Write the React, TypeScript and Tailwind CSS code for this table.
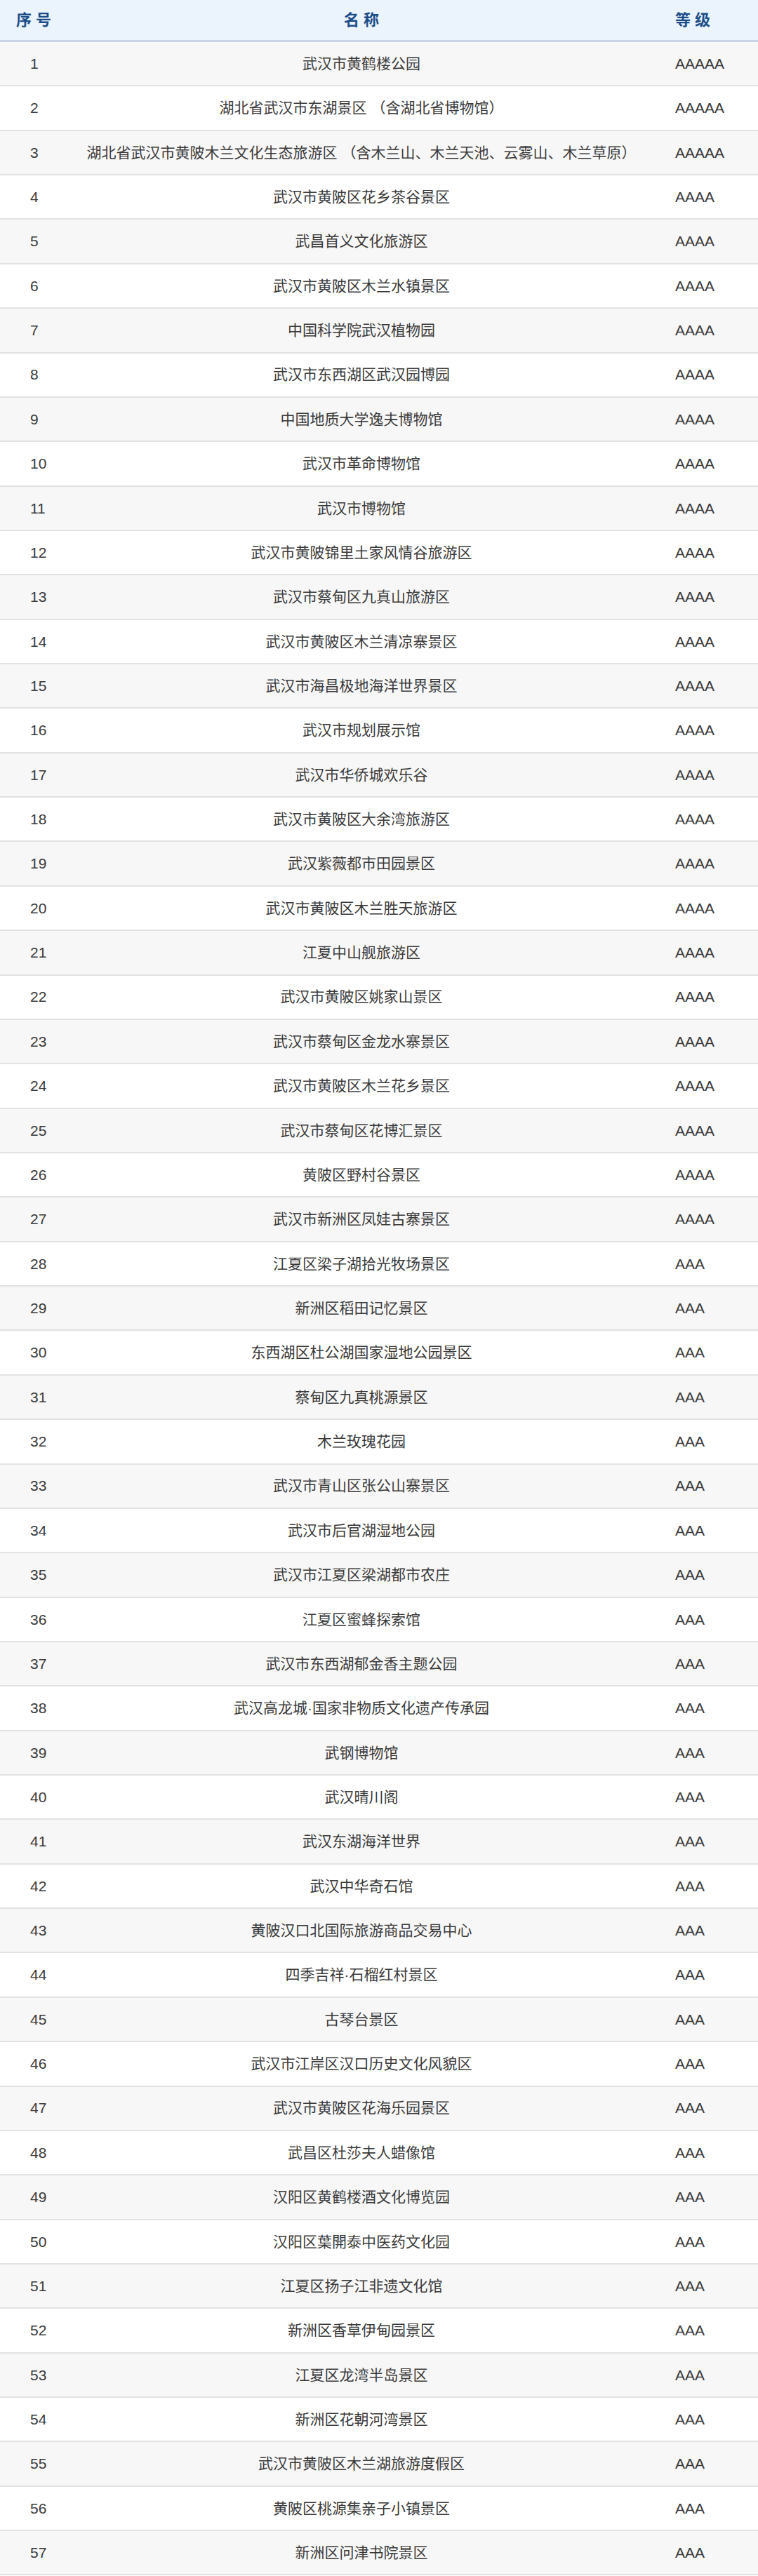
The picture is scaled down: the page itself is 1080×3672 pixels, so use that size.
const rows: [string, string][] = [
  ['武汉市黄鹤楼公园', 'AAAAA'],
  ['湖北省武汉市东湖景区 （含湖北省博物馆）', 'AAAAA'],
  ['湖北省武汉市黄陂木兰文化生态旅游区 （含木兰山、木兰天池、云雾山、木兰草原）', 'AAAAA'],
  ['武汉市黄陂区花乡茶谷景区', 'AAAA'],
  ['武昌首义文化旅游区', 'AAAA'],
  ['武汉市黄陂区木兰水镇景区', 'AAAA'],
  ['中国科学院武汉植物园', 'AAAA'],
  ['武汉市东西湖区武汉园博园', 'AAAA'],
  ['中国地质大学逸夫博物馆', 'AAAA'],
  ['武汉市革命博物馆', 'AAAA'],
  ['武汉市博物馆', 'AAAA'],
  ['武汉市黄陂锦里土家风情谷旅游区', 'AAAA'],
  ['武汉市蔡甸区九真山旅游区', 'AAAA'],
  ['武汉市黄陂区木兰清凉寨景区', 'AAAA'],
  ['武汉市海昌极地海洋世界景区', 'AAAA'],
  ['武汉市规划展示馆', 'AAAA'],
  ['武汉市华侨城欢乐谷', 'AAAA'],
  ['武汉市黄陂区大余湾旅游区', 'AAAA'],
  ['武汉紫薇都市田园景区', 'AAAA'],
  ['武汉市黄陂区木兰胜天旅游区', 'AAAA'],
  ['江夏中山舰旅游区', 'AAAA'],
  ['武汉市黄陂区姚家山景区', 'AAAA'],
  ['武汉市蔡甸区金龙水寨景区', 'AAAA'],
  ['武汉市黄陂区木兰花乡景区', 'AAAA'],
  ['武汉市蔡甸区花博汇景区', 'AAAA'],
  ['黄陂区野村谷景区', 'AAAA'],
  ['武汉市新洲区凤娃古寨景区', 'AAAA'],
  ['江夏区梁子湖拾光牧场景区', 'AAA'],
  ['新洲区稻田记忆景区', 'AAA'],
  ['东西湖区杜公湖国家湿地公园景区', 'AAA'],
  ['蔡甸区九真桃源景区', 'AAA'],
  ['木兰玫瑰花园', 'AAA'],
  ['武汉市青山区张公山寨景区', 'AAA'],
  ['武汉市后官湖湿地公园', 'AAA'],
  ['武汉市江夏区梁湖都市农庄', 'AAA'],
  ['江夏区蜜蜂探索馆', 'AAA'],
  ['武汉市东西湖郁金香主题公园', 'AAA'],
  ['武汉高龙城·国家非物质文化遗产传承园', 'AAA'],
  ['武钢博物馆', 'AAA'],
  ['武汉晴川阁', 'AAA'],
  ['武汉东湖海洋世界', 'AAA'],
  ['武汉中华奇石馆', 'AAA'],
  ['黄陂汉口北国际旅游商品交易中心', 'AAA'],
  ['四季吉祥·石榴红村景区', 'AAA'],
  ['古琴台景区', 'AAA'],
  ['武汉市江岸区汉口历史文化风貌区', 'AAA'],
  ['武汉市黄陂区花海乐园景区', 'AAA'],
  ['武昌区杜莎夫人蜡像馆', 'AAA'],
  ['汉阳区黄鹤楼酒文化博览园', 'AAA'],
  ['汉阳区葉開泰中医药文化园', 'AAA'],
  ['江夏区扬子江非遗文化馆', 'AAA'],
  ['新洲区香草伊甸园景区', 'AAA'],
  ['江夏区龙湾半岛景区', 'AAA'],
  ['新洲区花朝河湾景区', 'AAA'],
  ['武汉市黄陂区木兰湖旅游度假区', 'AAA'],
  ['黄陂区桃源集亲子小镇景区', 'AAA'],
  ['新洲区问津书院景区', 'AAA'],
]

const font = { fontFamily: '"Liberation Sans", "Noto Sans CJK SC", sans-serif' }

export default function App() {
  return (
    <div className="w-[1080px] bg-white text-[#3a3a3a]" style={font}>
      <div className="grid h-[60px] grid-cols-[100px_1fr_150px] items-center border-b-[3px] border-[#c8d5e5] bg-[#ebf3fc] text-[22px] font-bold text-[#1c4d88]">
        <div className="pl-[23px]">序 号</div>
        <div className="text-center">名 称</div>
        <div className="pl-[32px]">等 级</div>
      </div>
      {rows.map(([name, grade], i) => (
        <div
          key={i}
          className={`grid h-[63.37px] grid-cols-[100px_1fr_150px] items-center border-b-2 border-[#e2e2e2] text-[21px] ${
            i % 2 === 0 ? 'bg-[#f7f7f7]' : 'bg-white'
          }`}
        >
          <div className="pl-[43px]">{i + 1}</div>
          <div className="text-center whitespace-nowrap">{name}</div>
          <div className="pl-[32px]">{grade}</div>
        </div>
      ))}
    </div>
  )
}
